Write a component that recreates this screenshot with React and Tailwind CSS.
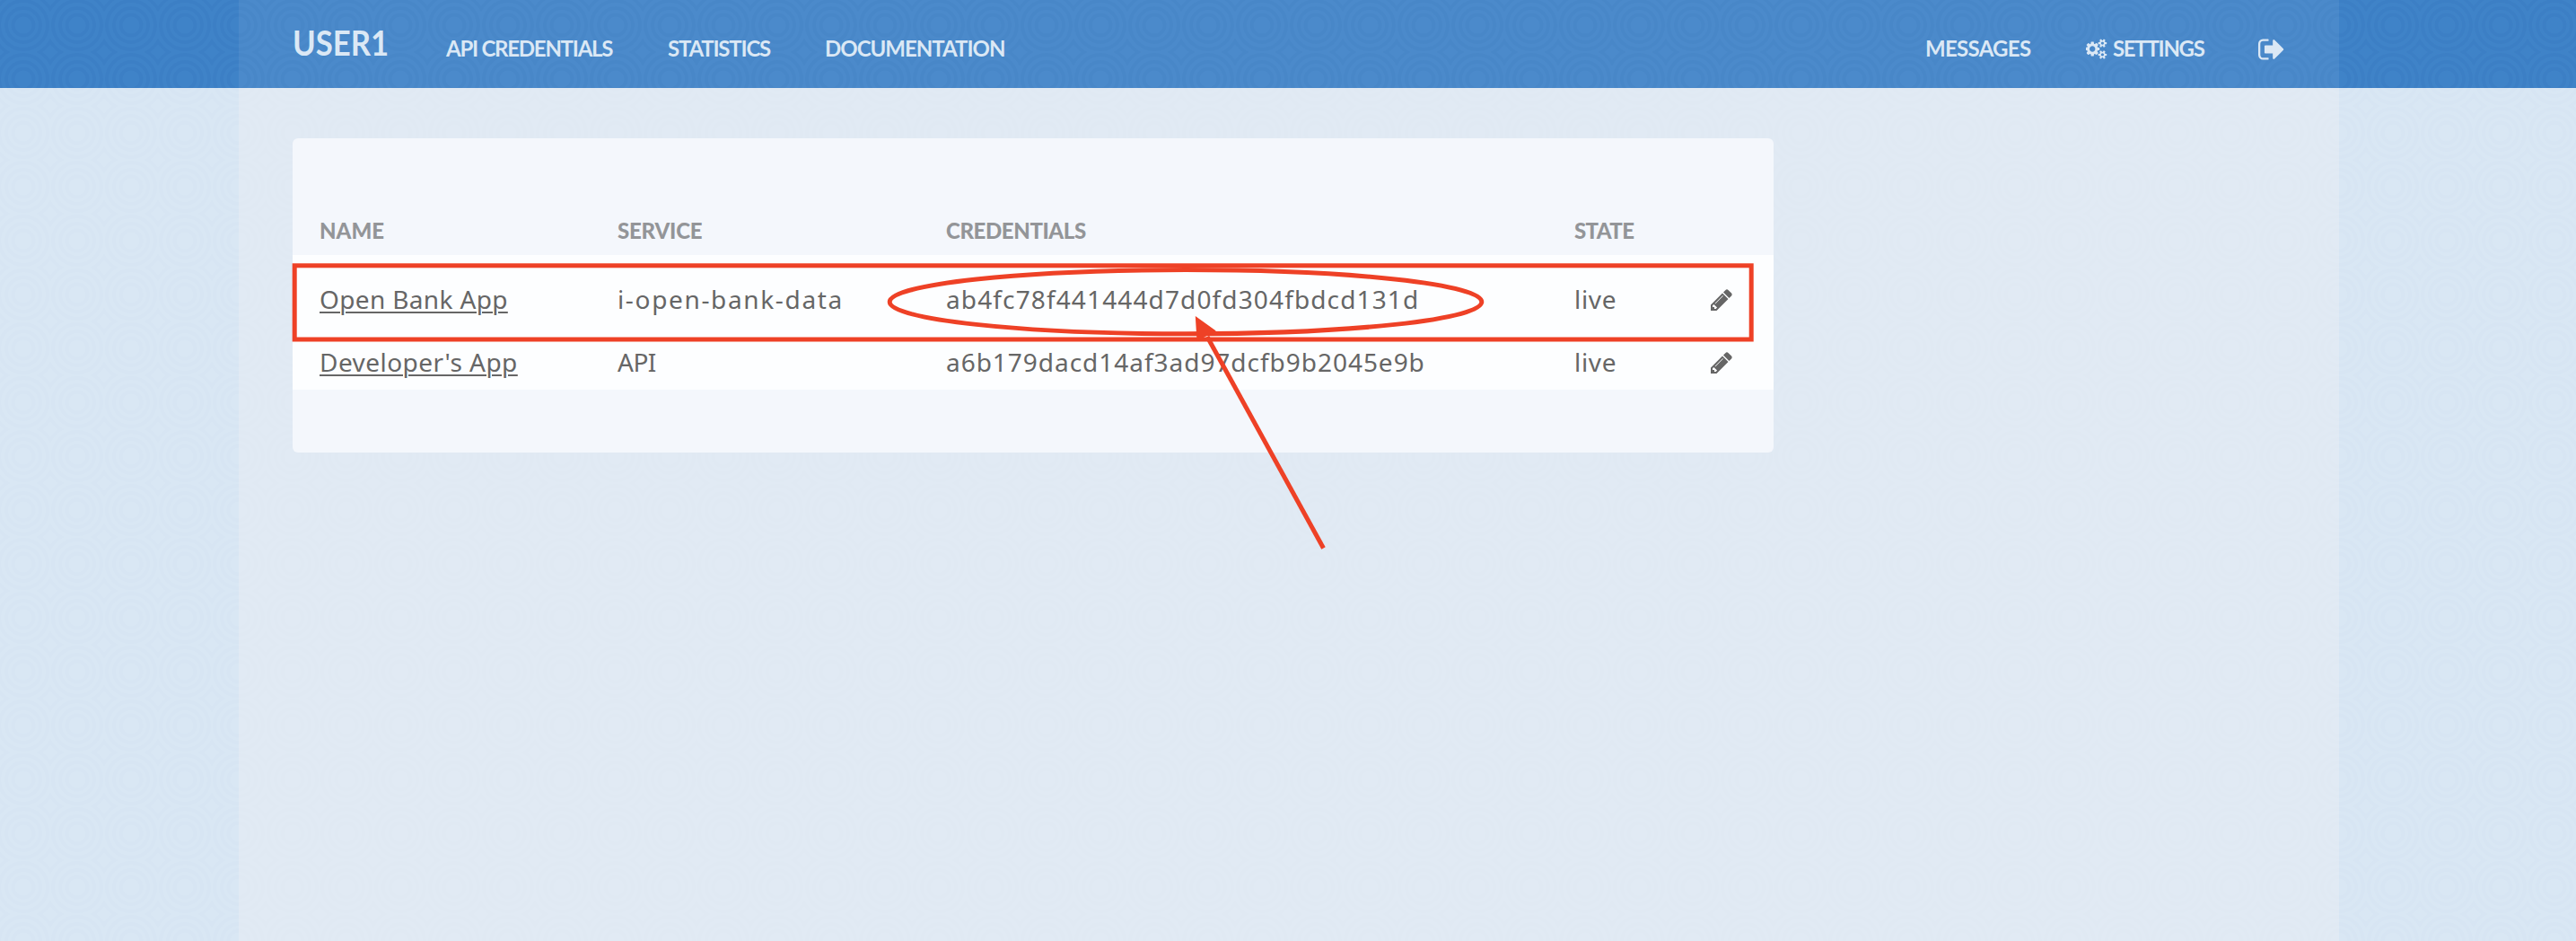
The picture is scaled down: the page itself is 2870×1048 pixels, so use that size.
import React from 'react';

const COGS =
  'M832 896q0-106-75-181t-181-75-181 75-75 181 75 181 181 75 181-75 75-181zm768 512q0-52-38-90t-90-38-90 38-38 90q0 53 37.5 90.5t90.5 37.5 90.5-37.5 37.5-90.5zm0-1024q0-52-38-90t-90-38-90 38-38 90q0 53 37.5 90.5t90.5 37.5 90.5-37.5 37.5-90.5zm-384 421v185q0 10-7 19.5t-16 10.5l-155 24q-11 35-32 76 34 48 90 115 7 11 7 20 0 12-7 19-23 30-82.5 89.5t-78.5 59.5q-11 0-21-7l-115-90q-37 19-77 31-11 108-23 155-7 24-30 24h-186q-11 0-20-7.5t-10-17.5l-23-153q-34-10-75-31l-118 89q-7 7-20 7-11 0-21-8-144-133-144-160 0-9 7-19 10-14 41-53t47-61q-23-44-35-82l-152-24q-10-1-17-9.5t-7-19.5v-185q0-10 7-19.5t16-10.5l155-24q11-35 32-76-34-48-90-115-7-11-7-20 0-12 7-20 22-30 82-89t79-59q11 0 21 7l115 90q34-18 77-32 11-108 23-154 7-24 30-24h186q11 0 20 7.5t10 17.5l23 153q34 10 75 31l118-89q8-7 20-7 11 0 21 8 144 133 144 160 0 8-7 19-12 16-42 54t-45 60q23 48 34 82l152 23q10 2 17 10.5t7 19.5zm640 533v140q0 16-149 31-12 27-30 52 51 113 51 138 0 4-4 7-122 71-124 71-8 0-46-47t-52-68q-20 2-30 2t-30-2q-14 21-52 68t-46 47q-2 0-124-71-4-3-4-7 0-25 51-138-18-25-30-52-149-15-149-31v-140q0-16 149-31 13-29 30-52-51-113-51-138 0-4 4-7 4-2 35-20t59-34 30-16q8 0 46 46.5t52 67.5q20-2 30-2t30 2q51-71 92-112l6-2q4 0 124 70 4 3 4 7 0 25-51 138 17 23 30 52 149 15 149 31zm0-1024v140q0 16-149 31-12 27-30 52 51 113 51 138 0 4-4 7-122 71-124 71-8 0-46-47t-52-68q-20 2-30 2t-30-2q-14 21-52 68t-46 47q-2 0-124-71-4-3-4-7 0-25 51-138-18-25-30-52-149-15-149-31v-140q0-16 149-31 13-29 30-52-51-113-51-138 0-4 4-7 4-2 35-20t59-34 30-16q8 0 46 46.5t52 67.5q20-2 30-2t30 2q51-71 92-112l6-2q4 0 124 70 4 3 4 7 0 25-51 138 17 23 30 52 149 15 149 31z';
const SIGN_OUT =
  'M704 1440q0 4 1 20t.5 26.5-3 23.5-10 19.5-20.5 6.5h-320q-119 0-203.5-84.5t-84.5-203.5v-704q0-119 84.5-203.5t203.5-84.5h320q13 0 22.5 9.5t9.5 22.5q0 4 1 20t.5 26.5-3 23.5-10 19.5-20.5 6.5h-320q-66 0-113 47t-47 113v704q0 66 47 113t113 47h312l11.5 1 11.5 3 8 5.5 7 9 2 13.5zm928-544q0 26-19 45l-544 544q-19 19-45 19t-45-19-19-45v-288h-448q-26 0-45-19t-19-45v-384q0-26 19-45t45-19h448v-288q0-26 19-45t45-19 45 19l544 544q19 19 19 45z';
const PENCIL =
  'M491 1536l91-91-235-235-91 91v107h128v128h107zm523-928q0-22-22-22-10 0-17 7l-542 542q-7 7-7 17 0 22 22 22 10 0 17-7l542-542q7-7 7-17zm-54-192l416 416-832 832h-416v-416zm683 96q0 53-37 90l-166 166-416-416 166-165q36-38 90-38 53 0 91 38l235 234q37 39 37 91z';

function Rings({ id, className }) {
  return (
    <svg className={className} aria-hidden="true">
      <defs>
        <pattern id={id} width="60" height="60" x="-4" y="-2" patternUnits="userSpaceOnUse">
          <g fill="none" stroke="currentColor" strokeWidth="4">
            <circle cx="30" cy="30" r="11.5" />
            <circle cx="30" cy="30" r="19" />
            <circle cx="30" cy="30" r="27" />
            <circle cx="30" cy="30" r="35" strokeWidth="3.5" />
          </g>
        </pattern>
      </defs>
      <rect width="100%" height="100%" fill={`url(#${id})`} />
    </svg>
  );
}

const rows = [
  {
    name: 'Open Bank App',
    nameCls: 'tracking-[0.35px]',
    service: 'i-open-bank-data',
    serviceCls: 'tracking-[1.65px]',
    key: 'ab4fc78f441444d7d0fd304fbdcd131d',
    keyCls: 'tracking-[1.13px]',
    height: 'h-20 pt-[18px]',
  },
  {
    name: "Developer's App",
    nameCls: 'tracking-[0.45px]',
    service: 'API',
    serviceCls: 'tracking-[-0.5px]',
    key: 'a6b179dacd14af3ad97dcfb9b2045e9b',
    keyCls: 'tracking-[0.97px]',
    height: 'h-[70px] pt-[8px]',
  },
];

const COLS = 'grid grid-cols-[332px_366px_700px_152px_40px] pl-[30px]';

function Header() {
  return (
    <header className="relative h-[98px] bg-[#3f83c8] text-[#dbe8f5] font-['Lato',sans-serif] font-bold text-[24px] leading-[30px]">
      <Rings id="rings-dark" className="absolute inset-0 h-full w-full text-[#1b5aa8]/10" />
      <div className="relative ml-[266px] flex h-full w-[2340px] items-start bg-[#dfe8f2]/8 pl-[60px]">
        <a className="mt-[23px] w-[171px] whitespace-nowrap">
          <span className="inline-block origin-left scale-x-[0.89] text-[39px] leading-[48px]">USER1</span>
        </a>
        <nav className="mt-[39px] flex whitespace-nowrap">
          <a className="w-[247px] tracking-[-1.25px]">API CREDENTIALS</a>
          <a className="w-[175px] tracking-[-1.2px]">STATISTICS</a>
          <a className="tracking-[-1px]">DOCUMENTATION</a>
        </nav>
        <nav className="ml-auto mr-[60px] mt-[39px] flex items-center whitespace-nowrap">
          <a className="w-[179px] tracking-[-0.7px]">MESSAGES</a>
          <a className="flex w-[192px] items-center tracking-[-1.3px]">
            <svg viewBox="0 0 1920 1792" className="mr-[6px] h-[23px] w-[24px] fill-current"><path d={COGS} /></svg>
            SETTINGS
          </a>
          <svg viewBox="64 128 1664 1536" className="mt-[2px] h-[28px] w-[30px] fill-current"><path d={SIGN_OUT} /></svg>
        </nav>
      </div>
    </header>
  );
}

function Annotations() {
  return (
    <svg className="absolute left-[325px] top-[290px] h-[330px] w-[1640px] text-[#ee4126]" viewBox="325 290 1640 330" fill="none" stroke="currentColor" strokeWidth="5">
      <rect x="328.2" y="295.8" width="1623" height="82.2" />
      <ellipse cx="1321" cy="336.2" rx="329.8" ry="35.6" />
      <path d="M1345 375L1474.5 610.5" />
      <path d="M1331.8 352L1354.8 368.5L1345.5 373.5L1333.5 380Z" fill="currentColor" stroke="none" />
    </svg>
  );
}

export default function App() {
  return (
    <div className="relative flex h-[1048px] w-[2870px] flex-col overflow-hidden bg-[#d9e7f4]">
      <Header />
      <main className="relative flex-1">
        <Rings id="rings-light" className="absolute inset-x-0 -top-[98px] h-[1048px] w-full text-[#3f83c8]/[0.014] [clip-path:inset(98px_0_0_0)]" />
        <div className="relative ml-[266px] h-full w-[2340px] bg-[#f1f2f4]/35 pl-[60px] pt-14">
          <section className="flex h-[350px] w-[1650px] flex-col overflow-hidden rounded-md bg-[#f4f7fc]">
            <div className={`${COLS} h-[130px] pt-[88px] font-['Lato',sans-serif] text-[24px] font-black leading-[30px] text-[#939598]`}>
              <span>NAME</span>
              <span className="tracking-[-0.2px]">SERVICE</span>
              <span className="tracking-[-0.4px]">CREDENTIALS</span>
              <span className="tracking-[-0.6px]">STATE</span>
            </div>
            {rows.map((r) => (
              <div key={r.key} className={`${COLS} ${r.height} items-center bg-[#fdfeff] font-['Noto_Sans',sans-serif] text-[28px] leading-[40px] text-[#666666]`}>
                <a className={`${r.nameCls} justify-self-start underline decoration-2 underline-offset-[3px]`}>{r.name}</a>
                <span className={r.serviceCls}>{r.service}</span>
                <span className={r.keyCls}>{r.key}</span>
                <span className="tracking-[0.7px]">live</span>
                <svg viewBox="128 128 1536 1536" className="mt-[2px] h-[24px] w-[24px] fill-current"><path d={PENCIL} /></svg>
              </div>
            ))}
          </section>
        </div>
      </main>
      <Annotations />
    </div>
  );
}
